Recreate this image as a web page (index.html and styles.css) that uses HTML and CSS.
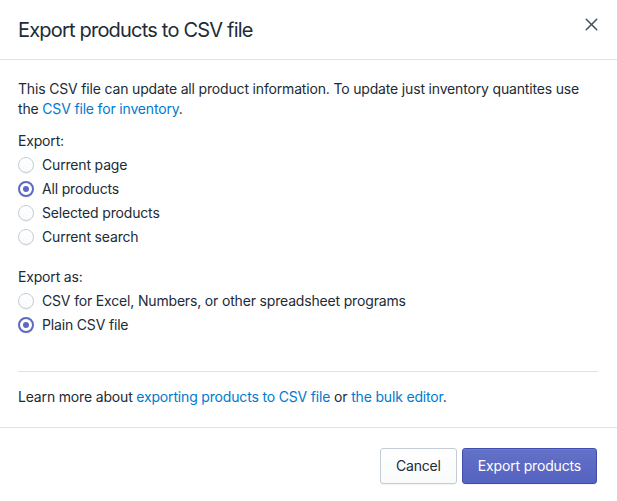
FILE: index.html
```html
<!DOCTYPE html>
<html lang="en">
<head>
<meta charset="utf-8">
<title>Export products to CSV file</title>
<link rel="stylesheet" href="styles.css">
</head>
<body>
<div class="modal">
  <header class="modal-header">
    <h2 class="modal-title">Export products to CSV file</h2>
    <button class="close-btn" aria-label="Close">
      <svg viewBox="0 0 20 20" width="15" height="15"><path d="M11.414 10l6.293-6.293a.999.999 0 1 0-1.414-1.414L10 8.586 3.707 2.293a.999.999 0 1 0-1.414 1.414L8.586 10l-6.293 6.293a.999.999 0 1 0 1.414 1.414L10 11.414l6.293 6.293a.997.997 0 0 0 1.414 0 .999.999 0 0 0 0-1.414L11.414 10z"/></svg>
    </button>
  </header>
  <section class="modal-section">
    <p class="intro">This CSV file can update all product information. To update just inventory quantites use the <a href="#">CSV file for inventory</a>.</p>
    <fieldset class="choice-list">
      <legend class="choice-title">Export:</legend>
      <label class="choice"><span class="radio"></span>Current page</label>
      <label class="choice"><span class="radio checked"></span>All products</label>
      <label class="choice"><span class="radio"></span>Selected products</label>
      <label class="choice"><span class="radio"></span>Current search</label>
    </fieldset>
    <fieldset class="choice-list second">
      <legend class="choice-title">Export as:</legend>
      <label class="choice"><span class="radio"></span>CSV for Excel, Numbers, or other spreadsheet programs</label>
      <label class="choice"><span class="radio checked"></span>Plain CSV file</label>
    </fieldset>
  </section>
  <section class="modal-section learn">
    <p>Learn more about <a href="#">exporting products to CSV file</a> or <a href="#">the bulk editor</a>.</p>
  </section>
  <footer class="modal-footer">
    <button class="btn">Cancel</button>
    <button class="btn primary">Export products</button>
  </footer>
</div>
</body>
</html>
```
FILE: styles.css
```css
* { box-sizing: border-box; }
html, body { margin: 0; padding: 0; background: #fff; }
body {
  font-family: Inter, "Noto Sans", sans-serif;
  font-size: 14px;
  line-height: 20px;
  letter-spacing: -0.17px;
  color: #212b36;
}
.modal { width: 617px; }
.modal-header {
  height: 60px;
  display: flex;
  align-items: center;
  justify-content: space-between;
  padding: 0 18px 0 18px;
  border-bottom: 1px solid #dfe3e8;
}
.modal-title {
  margin: 0;
  font-size: 20px;
  line-height: 28px;
  font-weight: 400;
  letter-spacing: -0.8px;
  margin-top: 1px;
}
.close-btn {
  border: 0;
  background: none;
  padding: 0;
  margin-top: -11px;
  display: flex;
  fill: #454f5b;
}
.modal-section {
  padding: 19px 19px 34px 18px;
}
.modal-section p { margin: 0; }
a { color: #007ace; text-decoration: none; }
.intro { margin-bottom: 12px !important; }
.choice-list {
  border: 0;
  margin: 0;
  padding: 0;
  display: flex;
  flex-direction: column;
}
.choice-list.second { margin-top: 18px; }
.choice-title {
  padding: 0;
  margin-bottom: 2px;
}
.choice {
  display: flex;
  align-items: center;
  height: 24px;
}
.radio {
  width: 16px;
  height: 16px;
  border-radius: 50%;
  border: 1px solid #c4cdd5;
  background: linear-gradient(to bottom, #fff, #f9fafb);
  box-shadow: 0 1px 0 rgba(22,29,37,0.05);
  margin-right: 8px;
  position: relative;
  flex: none;
}
.radio.checked {
  border: 2px solid #5c6ac4;
  background: #fff;
}
.radio.checked::after {
  content: "";
  position: absolute;
  left: 3px; top: 3px;
  width: 6px; height: 6px;
  border-radius: 50%;
  background: #5c6ac4;
}
.learn {
  margin: 0 19px 0 18px;
  padding: 15px 0 20px 0;
  border-top: 1px solid #dfe3e8;
}
.modal-footer {
  border-top: 1px solid #dfe3e8;
  display: flex;
  justify-content: flex-end;
  gap: 5px;
  padding: 20px 20px 17px 18px;
}
.btn {
  height: 36px;
  padding: 0 15px;
  font: inherit;
  font-size: 14px;
  letter-spacing: -0.17px;
  color: #212b36;
  border: 1px solid #c4cdd5;
  border-radius: 3px;
  background: linear-gradient(to bottom, #fff, #f9fafb);
  box-shadow: 0 1px 0 rgba(22,29,37,0.05);
}
.btn.primary {
  color: #fff;
  background: linear-gradient(to bottom, #6371c7, #5563c1);
  border-color: #3f4eae;
  box-shadow: inset 0 1px 0 0 #6f7bcb, 0 1px 0 rgba(22,29,37,0.05);
}
```
